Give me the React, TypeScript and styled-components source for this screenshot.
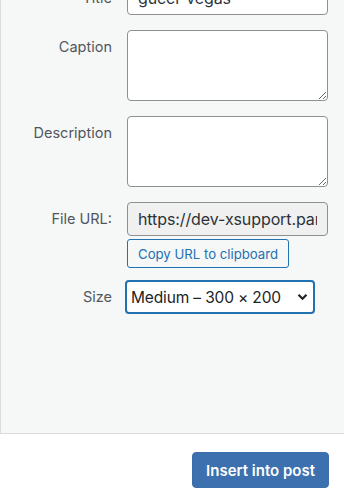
import React from 'react';
import styled, { createGlobalStyle } from 'styled-components';

const GlobalStyle = createGlobalStyle`
  html, body {
    margin: 0;
    padding: 0;
    background: #ffffff;
    font-family: Inter, "Noto Sans", "Liberation Sans", sans-serif;
    overflow: hidden;
  }
`;

const Page = styled.div`
  width: 344px;
  height: 500px;
  overflow: hidden;
  background: #ffffff;
`;

const Panel = styled.div`
  box-sizing: border-box;
  height: 434px;
  background: #f6f7f7;
  border-left: 1px solid #dcdcde;
  border-bottom: 1px solid #dcdcde;
  overflow: hidden;
`;

const Form = styled.div`
  display: flex;
  flex-direction: column;
  margin-top: -19px;
`;

const Row = styled.div<{ $space: number }>`
  display: grid;
  grid-template-columns: 111px 201px;
  column-gap: 15px;
  align-items: start;
  margin-top: ${({ $space }) => $space}px;
`;

const Label = styled.label`
  text-align: right;
  line-height: 34px;
  font-size: 14.5px;
  color: #50575e;
  white-space: nowrap;
`;

const Field = styled.div`
  display: flex;
  flex-direction: column;
  align-items: flex-start;
  gap: 3px;
`;

const TextInput = styled.input<{ $readonly?: boolean }>`
  box-sizing: border-box;
  width: 201px;
  height: 34px;
  margin: 0;
  padding: 0 10px;
  border: 1px solid #8c8f94;
  border-radius: 4px;
  background: ${({ $readonly }) => ($readonly ? '#f0f0f1' : '#ffffff')};
  color: #2c3338;
  font-family: inherit;
  font-size: 16px;
  letter-spacing: -0.1px;
  outline: none;
`;

const TextArea = styled.textarea`
  box-sizing: border-box;
  width: 201px;
  height: 71px;
  margin: 0;
  padding: 6px 10px;
  border: 1px solid #8c8f94;
  border-radius: 4px;
  background: #ffffff;
  color: #2c3338;
  font-family: inherit;
  font-size: 16px;
  outline: none;
  display: block;
`;

const SecondaryButton = styled.button`
  box-sizing: border-box;
  height: 29px;
  padding: 0 10px;
  border: 1px solid #2271b1;
  border-radius: 3px;
  background: #f6f7f7;
  color: #2271b1;
  font-family: inherit;
  font-size: 13.2px;
  cursor: pointer;
`;

const SelectWrap = styled.div`
  position: relative;
  width: 190px;
  margin-left: -2px;
`;

const Select = styled.select`
  box-sizing: border-box;
  width: 190px;
  height: 34px;
  margin: 0;
  padding: 0 22px 0 4px;
  border: 2px solid #2271b1;
  border-radius: 4px;
  background: #ffffff;
  color: #1d2327;
  font-family: inherit;
  font-size: 15.5px;
  letter-spacing: -0.15px;
  appearance: none;
  -webkit-appearance: none;
  outline: none;
`;

const Chevron = styled.svg`
  position: absolute;
  right: 7px;
  top: 13px;
  pointer-events: none;
`;

const Footer = styled.div`
  display: flex;
  justify-content: flex-end;
  padding: 18px 15px 0 0;
`;

const PrimaryButton = styled.button`
  box-sizing: border-box;
  height: 36px;
  padding: 0 13px;
  border: 1px solid #3a6ead;
  border-radius: 4px;
  background: #3c70ae;
  color: #ffffff;
  font-family: inherit;
  font-size: 15px;
  font-weight: 600;
  cursor: pointer;
`;

const App = () => {
  return (
    <Page>
      <GlobalStyle />
      <Panel>
        <Form>
          <Row $space={0}>
            <Label>Title</Label>
            <TextInput defaultValue="gucci-vegas" />
          </Row>
          <Row $space={15}>
            <Label>Caption</Label>
            <TextArea />
          </Row>
          <Row $space={15}>
            <Label>Description</Label>
            <TextArea />
          </Row>
          <Row $space={15}>
            <Label>File URL:</Label>
            <Field>
              <TextInput $readonly readOnly defaultValue="https://dev-xsupport.pandora.net/wp-content/uploads/gucci-vegas.jpg" />
              <SecondaryButton>Copy URL to clipboard</SecondaryButton>
            </Field>
          </Row>
          <Row $space={12}>
            <Label>Size</Label>
            <SelectWrap>
              <Select defaultValue="medium">
                <option value="thumbnail">Thumbnail – 150 × 150</option>
                <option value="medium">Medium – 300 × 200</option>
                <option value="full">Full Size – 1200 × 800</option>
              </Select>
              <Chevron width="11" height="8" viewBox="0 0 11 8">
                <path d="M1.5 1.8 L5.5 5.8 L9.5 1.8" fill="none" stroke="#1d2327" strokeWidth="2.2" />
              </Chevron>
            </SelectWrap>
          </Row>
        </Form>
      </Panel>
      <Footer>
        <PrimaryButton>Insert into post</PrimaryButton>
      </Footer>
    </Page>
  );
};

export default App;
